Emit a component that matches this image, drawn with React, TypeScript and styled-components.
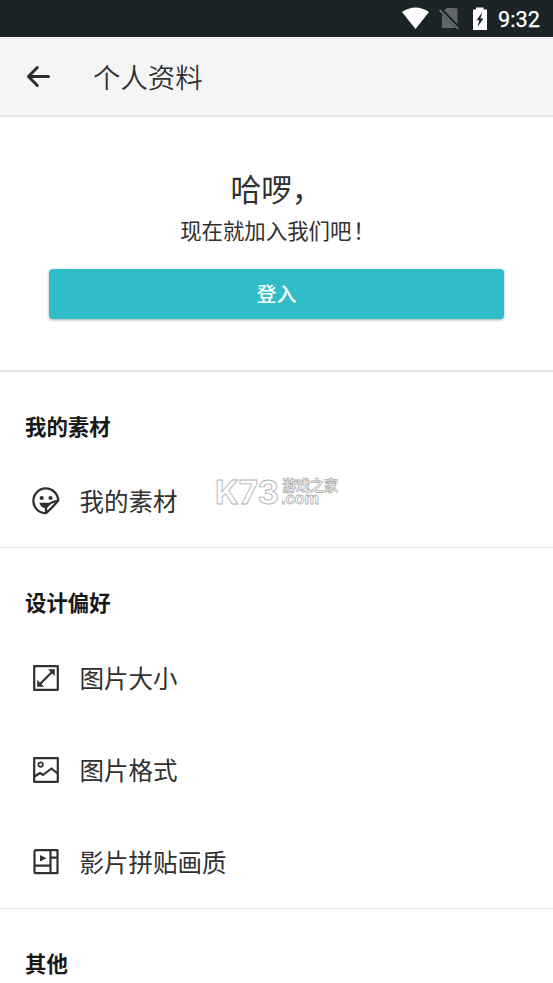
import React from "react";
import styled, { createGlobalStyle } from "styled-components";

const GlobalStyle = createGlobalStyle`
  * { box-sizing: border-box; }
  html, body { margin: 0; background: #fff; overflow: hidden; }
  body { font-family: "Noto Sans CJK SC", "Noto Sans", sans-serif; color: #303030; }
  svg { display: block; flex: none; }
`;

const Screen = styled.main`
  width: 553px;
  height: 983px;
  overflow: hidden;
  background: #fff;
`;

const StatusBar = styled.div`
  display: flex;
  align-items: center;
  height: 37px;
  padding-left: 401px;
  background: #1b2427;
  color: #fff;
`;

const Clock = styled.time`
  margin-left: 9px;
  font: 400 21.7px/37px Roboto, sans-serif;
  -webkit-text-stroke: 0.25px #fff;
  padding-top: 2px;
`;

const Header = styled.header`
  display: flex;
  align-items: center;
  gap: 41px;
  height: 80px;
  padding-left: 25px;
  background: #f5f5f5;
  border-bottom: 2px solid #e5e5e5;
`;

const BackButton = styled.button`
  padding: 0;
  border: 0;
  background: none;
  color: #2d2d2d;
`;

const Title = styled.h1`
  margin: 0;
  font-size: 27.4px;
  font-weight: 350;
  line-height: 40px;
`;

const Profile = styled.section`
  display: flex;
  flex-direction: column;
  align-items: center;
  height: 255px;
  padding: 49px 49px 0;
  border-bottom: 2px solid #e5e5e5;
`;

const Greeting = styled.h2`
  margin: 0;
  font-size: 30.7px;
  font-weight: 400;
  line-height: 44px;
`;

const Invite = styled.p`
  margin: 4px 0 0;
  font-size: 21.4px;
  line-height: 32px;
  white-space: nowrap;
`;

const Exclamation = styled.span`
  display: inline-block;
  width: 21.5px;
  padding-left: 2px;
`;

const LoginButton = styled.button`
  width: 455px;
  height: 50px;
  margin-top: 23px;
  padding: 0;
  border: 0;
  border-radius: 4px;
  background: #30bdc8;
  box-shadow: 0 1px 3px rgba(0, 0, 0, 0.35);
  color: #fff;
  font: 500 20px/50px "Noto Sans CJK SC", sans-serif;
`;

const Section = styled.section`
  border-bottom: 1px solid #e3e3e3;
`;

const SectionTitle = styled.h3`
  height: 83.4px;
  margin: 0;
  padding: 38px 25px 0;
  color: #181818;
  font-size: 21.4px;
  font-weight: 700;
  line-height: 32px;
`;

const Row = styled.div`
  display: flex;
  align-items: center;
  height: 92px;
  padding: 0 0 1px 31px;
`;

const Icon = styled.svg`
  margin-top: 1px;
`;

const RowLabel = styled.span`
  margin-left: 18.5px;
  padding-top: 1px;
  font-size: 24.5px;
  line-height: 36px;
`;

const Watermark = styled.svg`
  margin-left: 35px;
  margin-top: -19px;
`;

const StatusIcons = () => (
  <svg width="88" height="37" viewBox="401 0 88 37" aria-hidden="true">
    <path d="M402 12Q415.500 3 429 12L415.500 29Z" fill="#fff" />
    <path d="M442 12L447 8H456Q457.500 8 457.500 9.500V26.500Q457.500 28 456 28H442Z" fill="#626769" />
    <path d="M440 9L459 28.500" stroke="#1b2427" strokeWidth="4" />
    <path d="M439.500 10L458.500 29" stroke="#74797a" strokeWidth="1.700" />
    <path d="M473 9.500H476V7.500H483.500V9.500H487V30H473Z" fill="#fff" />
    <path d="M482.300 12L476.500 20.300H479.300L477.500 27L483.500 18.500H480.500Z" fill="#1b2427" />
  </svg>
);

const BackIcon = () => (
  <svg width="27" height="24" viewBox="0 0 27 24" fill="none" stroke="currentColor" strokeWidth="3" strokeLinecap="round" strokeLinejoin="round">
    <path d="M23.500 12.500H3.500M12.300 3.500L3.500 12.500L12.300 21.500" />
  </svg>
);

type IconName = "sticker" | "resize" | "image" | "video";

const iconShapes: Record<IconName, React.ReactNode> = {
  sticker: (
    <>
      <path d="M15 27.200A12.400 12.400 0 1 1 27.200 14.500Q21.500 21.500 15 27.200ZM15 27V21.500Q19 15.500 27 14.800" strokeWidth="2.300" />
      <circle cx="10.700" cy="12" r="2.100" fill="currentColor" stroke="none" />
      <circle cx="19.500" cy="12" r="2.100" fill="currentColor" stroke="none" />
      <path d="M8.300 16.800H20Q17 18.500 15.500 22Q10 22.500 8.300 16.800Z" fill="currentColor" stroke="none" />
    </>
  ),
  resize: (
    <>
      <path d="M3.200 3.200H26.800V26.800H3.200Z" />
      <path d="M9 21L21 9" />
      <path d="M17 6.200H23.800V13ZM6.200 17V23.800H13Z" fill="currentColor" stroke="none" />
    </>
  ),
  image: (
    <>
      <path d="M3.200 3.200H26.800V26.800H3.200Z" />
      <circle cx="9.600" cy="9.600" r="2.300" strokeWidth="1.700" />
      <path d="M3.500 21.500L9 18L12 20L20.500 13.500L26.500 18.500" />
    </>
  ),
  video: (
    <>
      <path d="M5 3.200H26.500V26.200H5Q3.500 26.200 3.500 24.700V4.700Q3.500 3.200 5 3.200ZM19.500 3.200V26.200M3.500 18.700H19.500M19.500 10.700H26" />
      <path d="M9 8L15.500 11.200L9 14.400Z" fill="currentColor" stroke="none" />
    </>
  ),
};

const RowIcon = ({ name }: { name: IconName }) => (
  <Icon width="30" height="30" viewBox="0 0 30 30" fill="none" stroke="currentColor" strokeWidth="2.200" strokeLinejoin="round">
    {iconShapes[name]}
  </Icon>
);

const SiteMark = () => (
  <Watermark width="130" height="50" viewBox="0 -8 130 50" fill="#fff" stroke="#b0b0b0" strokeWidth="0.800">
    <text x="2" y="29.500" fontFamily="Inter, sans-serif" fontWeight="700" fontSize="32" textLength="64" lengthAdjust="spacingAndGlyphs">K73</text>
    <text x="69" y="17" fontFamily="Noto Sans CJK SC, sans-serif" fontWeight="700" fontSize="14.500" textLength="56" lengthAdjust="spacingAndGlyphs">游戏之家</text>
    <text x="68" y="29.500" fontFamily="Liberation Sans, sans-serif" fontWeight="700" fontSize="16" textLength="38" lengthAdjust="spacingAndGlyphs">.com</text>
  </Watermark>
);

const preferences: { icon: IconName; label: string }[] = [
  { icon: "resize", label: "图片大小" },
  { icon: "image", label: "图片格式" },
  { icon: "video", label: "影片拼贴画质" },
];

export default function App() {
  return (
    <>
      <GlobalStyle />
      <Screen>
        <StatusBar>
          <StatusIcons />
          <Clock>9:32</Clock>
        </StatusBar>
        <Header>
          <BackButton aria-label="返回"><BackIcon /></BackButton>
          <Title>个人资料</Title>
        </Header>
        <Profile>
          <Greeting>哈啰，</Greeting>
          <Invite>现在就加入我们吧<Exclamation>！</Exclamation></Invite>
          <LoginButton>登入</LoginButton>
        </Profile>
        <Section>
          <SectionTitle>我的素材</SectionTitle>
          <Row>
            <RowIcon name="sticker" />
            <RowLabel>我的素材</RowLabel>
            <SiteMark />
          </Row>
        </Section>
        <Section>
          <SectionTitle>设计偏好</SectionTitle>
          {preferences.map(({ icon, label }) => (
            <Row key={icon}>
              <RowIcon name={icon} />
              <RowLabel>{label}</RowLabel>
            </Row>
          ))}
        </Section>
        <SectionTitle>其他</SectionTitle>
      </Screen>
    </>
  );
}
